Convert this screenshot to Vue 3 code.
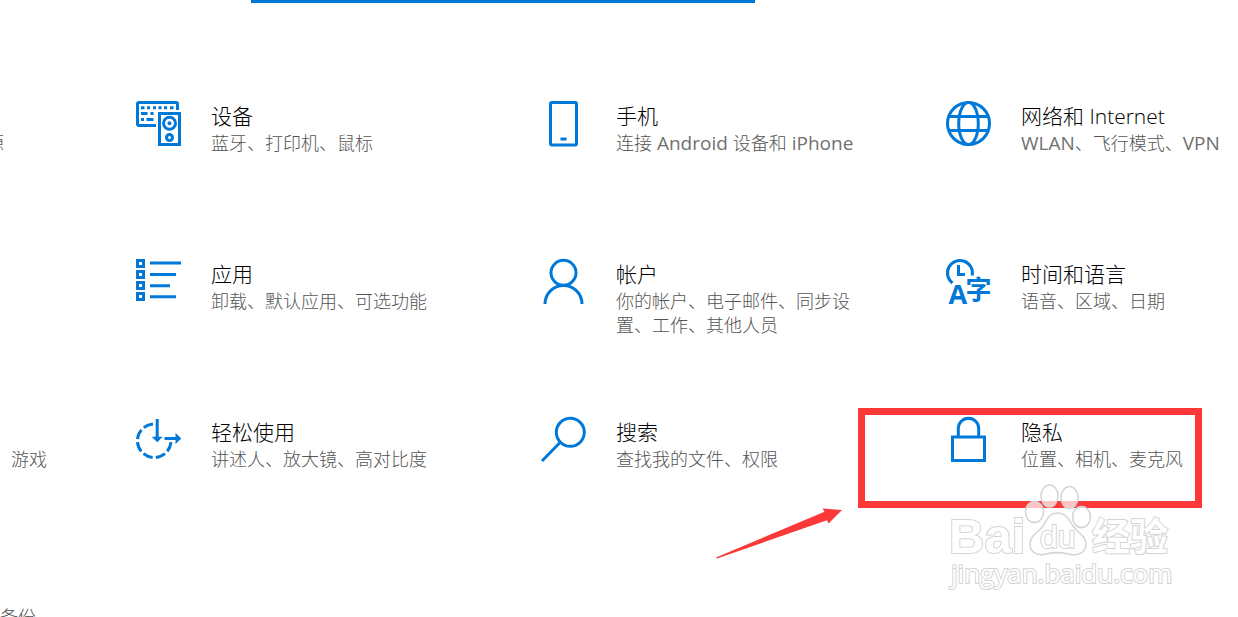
<script setup>
const edge = ['源', '', '游戏', '备份']

const rows = [
  [
    { icon: 'devices', title: '设备', text: '蓝牙、打印机、鼠标' },
    { icon: 'phone', title: '手机', text: '连接 Android 设备和 iPhone' },
    { icon: 'globe', title: '网络和 Internet', text: 'WLAN、飞行模式、VPN' },
  ],
  [
    { icon: 'apps', title: '应用', text: '卸载、默认应用、可选功能' },
    { icon: 'account', title: '帐户', text: '你的帐户、电子邮件、同步设置、工作、其他人员' },
    { icon: 'time', title: '时间和语言', text: '语音、区域、日期' },
  ],
  [
    { icon: 'ease', title: '轻松使用', text: '讲述人、放大镜、高对比度' },
    { icon: 'search', title: '搜索', text: '查找我的文件、权限' },
    { icon: 'lock', title: '隐私', text: '位置、相机、麦克风' },
  ],
  [],
]

// Splits a line into Latin and Chinese runs so each can have its own weight.
const runs = (line) => line.split(/( ?[A-Za-z]+ ?)/).filter(Boolean)
const isLatin = (run) => /[A-Za-z]/.test(run)
</script>

<template>
  <main class="page">
    <div class="search-edge"></div>
    <div class="rows">
      <section v-for="(row, i) in rows" :key="i" class="row">
        <p class="edge" :class="'edge-' + i">{{ edge[i] }}</p>
        <a v-for="item in row" :key="item.title" href="#" class="tile">
          <svg class="icon" viewBox="0 0 46 46" aria-hidden="true">
            <g v-if="item.icon === 'devices'">
              <path d="M20 24.5H3Q1.500 24.500 1.500 23V3Q1.500 1.500 3 1.500H40Q41.500 1.500 41.500 3V9" />
              <path d="M5 6.700H8.500M11 6.700H14M17 6.700H20M22.500 6.700H25.500M28 6.700H31M34 6.700H37.500M5 12.500H11.500M14.500 12.500H17.500M5 18.500H8M10.500 18.500H17.500" />
              <rect x="23.500" y="12.500" width="20" height="31" />
              <circle cx="33.500" cy="22.300" r="6" />
              <circle class="solid" cx="33.500" cy="22.300" r="2" />
              <circle cx="33.500" cy="36.500" r="3" />
            </g>
            <g v-else-if="item.icon === 'phone'">
              <rect x="9.500" y="1.500" width="26" height="42.500" rx="1.500" />
              <path d="M19.500 38H25.500" />
            </g>
            <g v-else-if="item.icon === 'globe'">
              <circle cx="22.500" cy="22.500" r="21" />
              <ellipse cx="22.500" cy="22.500" rx="9.800" ry="21" />
              <path d="M3 15.500H42M3 29.500H42" />
            </g>
            <g v-else-if="item.icon === 'apps'">
              <path d="M1.500 1.500H7.500V7.500H1.500ZM1.500 12.500H7.500V18.500H1.500ZM1.500 23.500H7.500V29.500H1.500ZM1.500 34.500H7.500V40.500H1.500Z" />
              <path d="M14 4H45M14 15.500H40M14 26.800H34M14 37.800H40" />
            </g>
            <g v-else-if="item.icon === 'account'">
              <circle cx="22.500" cy="13.800" r="12.500" />
              <path d="M4 45A18.500 18.500 0 0 1 41 45" />
            </g>
            <g v-else-if="item.icon === 'time'">
              <path d="M6.500 24A12.500 12.500 0 1 1 26.200 16.500" />
              <path d="M12.500 6V15.500H19" />
              <text class="letter" x="2.500" y="45">A</text>
              <text class="han" x="19.500" y="40">字</text>
            </g>
            <g v-else-if="item.icon === 'ease'">
              <path stroke-dasharray="10 3.200" d="M17 7A16.800 16.800 0 1 0 35 25" />
              <path d="M21.200 2V21M28.500 21.500H41" />
              <path class="solid" d="M15.700 19.700H26.700L21.200 25.300ZM39.500 16L45.300 21.500L39.500 27Z" />
            </g>
            <g v-else-if="item.icon === 'search'">
              <circle cx="29.300" cy="15.300" r="14" />
              <path d="M19.300 25.300L1 44" />
            </g>
            <g v-else>
              <rect x="6.500" y="20" width="32" height="23.500" />
              <path d="M12.300 20V11.500A10.200 10.200 0 0 1 32.700 11.500V20" />
            </g>
          </svg>
          <span class="copy">
            <span class="title">{{ item.title }}</span>
            <span class="text"><span v-for="(run, k) in runs(item.text)" :key="k" :class="{ latin: isLatin(run) }">{{ run }}</span></span>
          </span>
        </a>
      </section>
    </div>

    <div class="mark"></div>
    <svg class="arrow" viewBox="0 0 128 52" aria-hidden="true">
      <path d="M1 50.500L109.500 4.700L107.500 1.500L127 3L113.500 16.500L112 13.300L2 51.500Z" />
    </svg>
    <svg class="stamp" viewBox="0 0 230 115">
      <g class="outline">
        <text class="bai" x="4" y="73">Bai</text>
        <path d="M112 33C121 33 124 40 128 46C134 54 142 57 141 65C140 74 131 76 123 74C115 72 109 72 101 74C93 76 85 73 85 64C85 55 94 52 98 46C102 40 104 33 112 33Z" />
        <ellipse cx="104.500" cy="16" rx="8.500" ry="11" />
        <ellipse cx="124.500" cy="17.500" rx="8.500" ry="11" />
        <ellipse cx="89.500" cy="32" rx="9" ry="10.500" />
        <ellipse cx="136.500" cy="37" rx="9" ry="10.500" />
        <text class="du" x="95" y="68">du</text>
        <text class="jy" x="147" y="70">经验</text>
        <text class="url" x="6" y="103">jingyan.baidu.com</text>
      </g>
    </svg>
  </main>
</template>

<style>
body {
  margin: 0;
  background: #fff;
}
</style>

<style scoped>
.page {
  position: relative;
  height: 100vh;
  overflow: hidden;
  background: #fff;
  font-family: "Open Sans", "Noto Sans CJK SC", sans-serif;
  font-weight: 300;
}
.search-edge {
  width: 504px;
  height: 3px;
  margin-left: 251px;
  background: #0078d7;
}
.rows {
  padding-top: 98px;
}
.row {
  display: grid;
  grid-template-columns: 136px repeat(3, minmax(405px, 1fr));
  height: 158px;
}
.edge {
  display: flex;
  justify-content: flex-end;
  width: 47px;
  margin: 0;
  padding-top: 30px;
  font-size: 18px;
  line-height: 24px;
  color: #555;
  white-space: nowrap;
}
.edge-0 {
  width: 4px;
}
.edge-3 {
  width: 36px;
}
.tile {
  display: flex;
  align-items: flex-start;
  gap: 29px;
  color: #000;
  text-decoration: none;
}
.icon {
  flex: none;
  width: 46px;
  height: 46px;
  overflow: visible;
  fill: none;
  stroke: #0078d7;
  stroke-width: 3px;
}
.icon .solid {
  fill: #0078d7;
  stroke: none;
}
.icon text {
  fill: #0078d7;
  stroke: none;
}
.letter {
  font: 700 27px "Open Sans", sans-serif;
}
.han {
  font: 700 26px "Noto Sans CJK SC", sans-serif;
}
.copy {
  display: flex;
  flex-direction: column;
  width: 240px;
}
.title {
  font-size: 21px;
  line-height: 30px;
  white-space: nowrap;
}
.text {
  font-size: 18px;
  line-height: 24px;
  color: #555;
}
.latin {
  font-size: 19px;
  line-height: 1;
  font-weight: 400;
  color: #707070;
}
.mark {
  position: absolute;
  left: 858px;
  top: 408px;
  box-sizing: border-box;
  width: 344px;
  height: 100px;
  border: 7px solid #fc3838;
}
.arrow {
  position: absolute;
  left: 715px;
  top: 507px;
  width: 128px;
  height: 52px;
  fill: #fc3838;
}
.stamp {
  position: absolute;
  left: 945px;
  top: 480px;
  width: 230px;
  height: 115px;
}
.outline {
  fill: rgba(255, 255, 255, 0.7);
  stroke: #d4d4d4;
  stroke-width: 1.5px;
}
.outline text {
  paint-order: stroke;
  stroke-width: 2px;
  fill: #fff;
}
.bai {
  font: 700 49px "Liberation Sans", sans-serif;
}
.du {
  font: 400 32px "Liberation Sans", sans-serif;
}
.jy {
  font: 700 38px "Noto Sans CJK SC", sans-serif;
}
.url {
  font: 400 26px "Open Sans", sans-serif;
}
</style>
